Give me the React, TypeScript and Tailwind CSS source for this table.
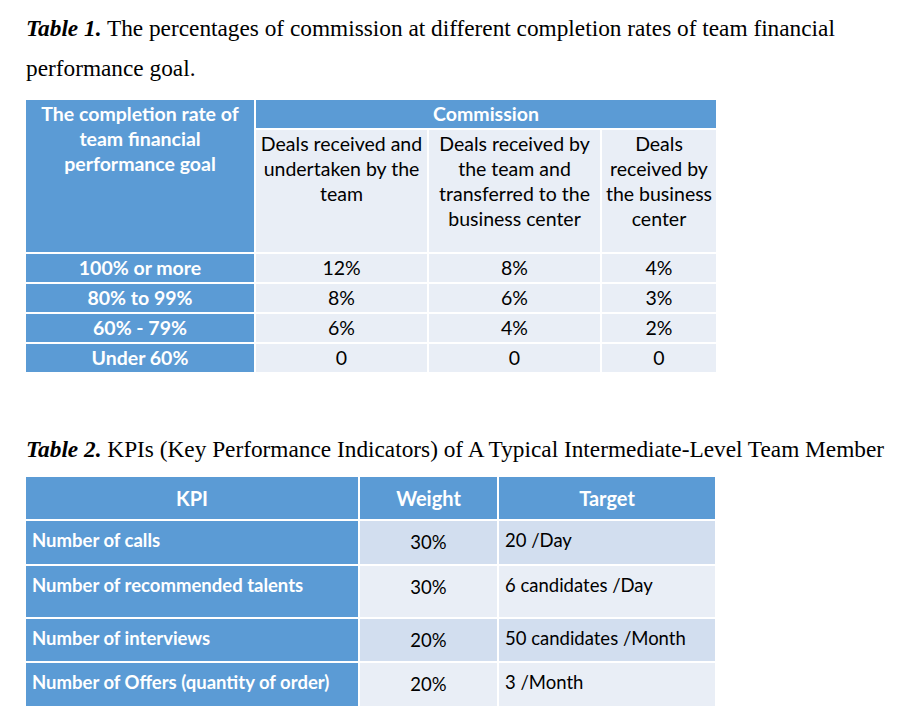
import React from 'react';

const commissionRows = [
  { rate: '100% or more', a: '12%', b: '8%', c: '4%' },
  { rate: '80% to 99%', a: '8%', b: '6%', c: '3%' },
  { rate: '60% - 79%', a: '6%', b: '4%', c: '2%' },
  { rate: 'Under 60%', a: '0', b: '0', c: '0' },
];

const kpiRows = [
  { kpi: 'Number of calls', weight: '30%', target: '20 /Day', dark: true },
  { kpi: 'Number of recommended talents', weight: '30%', target: '6 candidates /Day', dark: false },
  { kpi: 'Number of interviews', weight: '20%', target: '50 candidates /Month', dark: true },
  { kpi: 'Number of Offers (quantity of order)', weight: '20%', target: '3 /Month', dark: false },
];

const Caption = ({ label, children }: { label: string; children: React.ReactNode }) => (
  <p className="font-['Liberation_Serif',serif] text-[23.3px] leading-[40px] text-black">
    <span className="font-bold italic">{label}</span> {children}
  </p>
);

export default function App() {
  return (
    <div className="min-h-screen bg-white px-[26px] pt-[8px] font-['Lato',sans-serif]">
      <Caption label="Table 1.">
        The percentages of commission at different completion rates of team financial performance goal.
      </Caption>

      <div className="mt-[12px] grid w-[690px] grid-cols-[228px_171px_171px_114px] grid-rows-[28px_122px_28px_28px_28px_28px] gap-[2px] bg-white text-[19.5px]">
        <div className="row-span-2 bg-[#5b9bd5] pt-[1px] text-center font-bold leading-[25px] text-white">
          The completion rate of<br />team financial<br />performance goal
        </div>
        <div className="col-span-3 bg-[#5b9bd5] text-center font-bold leading-[28px] text-white">Commission</div>
        <div className="bg-[#e9eef6] pt-[1px] text-center leading-[25px] text-black">
          Deals received and<br />undertaken by the<br />team
        </div>
        <div className="bg-[#e9eef6] pt-[1px] text-center leading-[25px] text-black">
          Deals received by<br />the team and<br />transferred to the<br />business center
        </div>
        <div className="bg-[#e9eef6] pt-[1px] text-center leading-[25px] text-black">
          Deals<br />received by<br />the business<br />center
        </div>
        {commissionRows.map((r) => (
          <React.Fragment key={r.rate}>
            <div className="flex items-center justify-center bg-[#5b9bd5] font-bold text-white">{r.rate}</div>
            <div className="flex items-center justify-center bg-[#e9eef6] text-black">{r.a}</div>
            <div className="flex items-center justify-center bg-[#e9eef6] text-black">{r.b}</div>
            <div className="flex items-center justify-center bg-[#e9eef6] text-black">{r.c}</div>
          </React.Fragment>
        ))}
      </div>

      <div className="mt-[57px]">
        <Caption label="Table 2.">
          KPIs (Key Performance Indicators) of A Typical Intermediate-Level Team Member
        </Caption>
      </div>

      <div className="mt-[8px] grid w-[689px] grid-cols-[332px_137px_216px] grid-rows-[42px_43px_51px_42px_43px] gap-[2px] bg-white text-[18.5px]">
        <div className="flex items-center justify-center bg-[#5b9bd5] text-[20px] font-bold text-white">KPI</div>
        <div className="flex items-center justify-center bg-[#5b9bd5] text-[20px] font-bold text-white">Weight</div>
        <div className="flex items-center justify-center bg-[#5b9bd5] text-[20px] font-bold text-white">Target</div>
        {kpiRows.map((r) => (
          <React.Fragment key={r.kpi}>
            <div className="bg-[#5b9bd5] pl-[6px] pt-[8px] font-bold leading-[22px] text-white">{r.kpi}</div>
            <div className={`${r.dark ? 'bg-[#d2deef]' : 'bg-[#e9eef6]'} pt-[10px] text-center leading-[22px] text-black`}>
              {r.weight}
            </div>
            <div className={`${r.dark ? 'bg-[#d2deef]' : 'bg-[#e9eef6]'} pl-[6px] pt-[8px] leading-[22px] text-black`}>
              {r.target}
            </div>
          </React.Fragment>
        ))}
      </div>
    </div>
  );
}
